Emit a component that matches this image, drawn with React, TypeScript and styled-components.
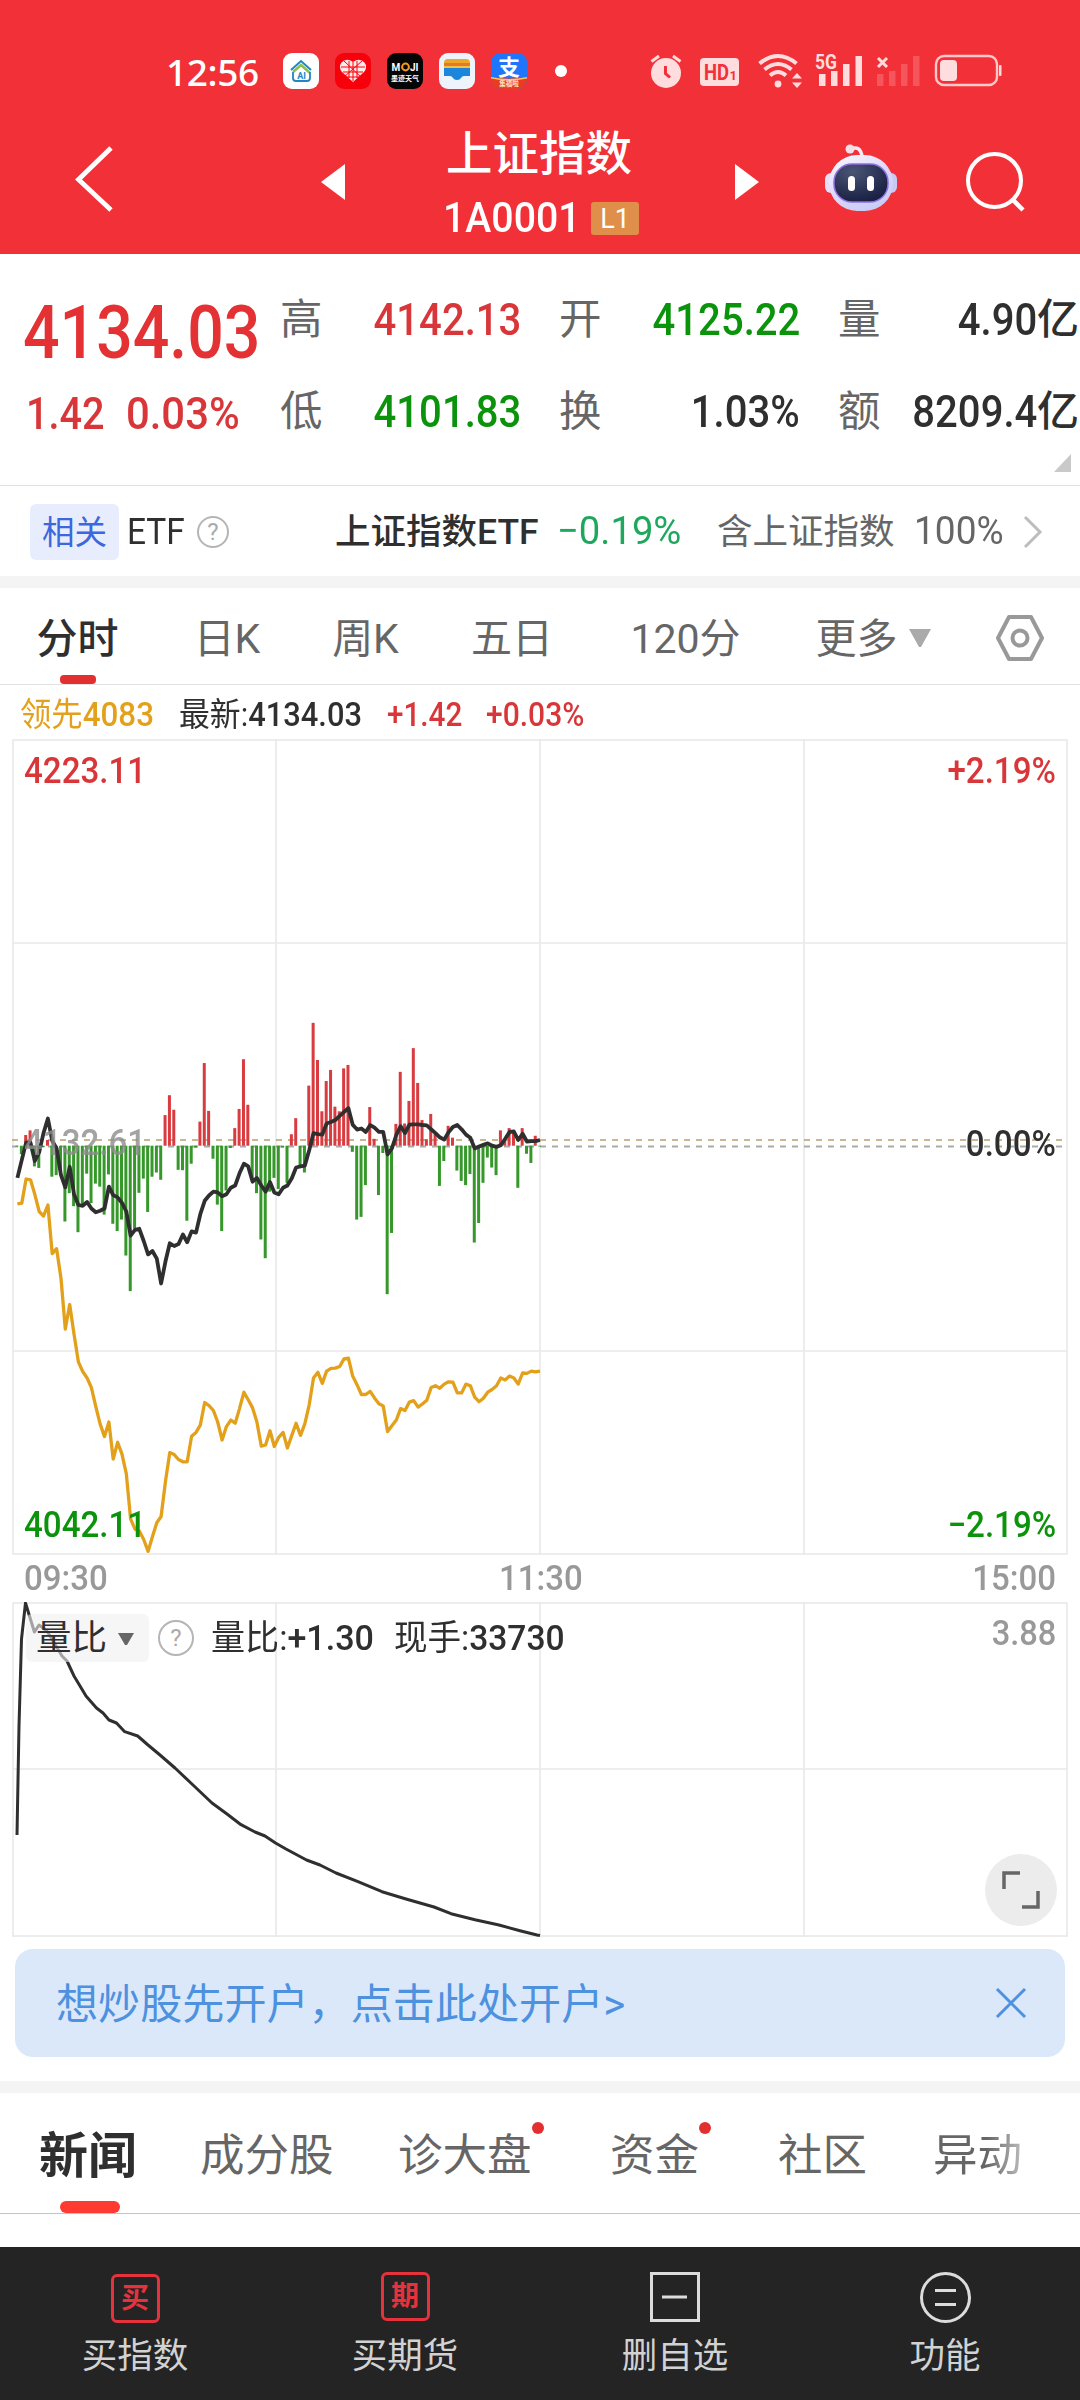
import { ReactNode } from 'react'
import styled, { createGlobalStyle, css } from 'styled-components'

const colors = {
  brand: '#f23037',
  red: '#d9363a',
  green: '#0c930c',
  ink: '#2f2f2f',
  gray: '#666',
  light: '#999',
  line: '#e9e9e9',
  amber: '#e3a01b',
}

const GlobalStyle = createGlobalStyle`
  * {
    box-sizing: border-box;
  }

  body {
    margin: 0;

    font-family: Roboto, 'Noto Sans CJK SC', sans-serif;
    color: ${colors.ink};

    background: #fff;
  }
`

const Page = styled.div`
  display: flex;
  flex-direction: column;

  width: 1080px;
  height: 2400px;
  overflow: hidden;

  background: #fff;
`

/* Condensed digits: $w is the box that the text takes, $k the squeeze */
const NumStyled = styled.span<{
  $w: number
  $size: number
  $color?: string
  $weight?: number
  $right?: boolean
}>`
  display: inline-flex;
  flex: none;

  justify-content: ${({ $right }) => ($right ? 'flex-end' : 'flex-start')};

  width: ${({ $w }) => $w}px;

  font-size: ${({ $size }) => $size}px;
  font-weight: ${({ $weight = 500 }) => $weight};
  line-height: 1;
  color: ${({ $color = 'inherit' }) => $color};
  white-space: nowrap;
`

const NumInner = styled.span<{ $k: number; $right?: boolean }>`
  flex: none;

  transform: scaleX(${({ $k }) => $k});
  transform-origin: ${({ $right }) => ($right ? 'right' : 'left')} center;
`

const Regular = styled.span`
  font-weight: 400;
`

type NumProps = {
  w: number
  size: number
  k?: number
  color?: string
  weight?: number
  right?: boolean
  children: ReactNode
}

const Num = ({ w, size, k = 0.9, color, weight, right, children }: NumProps) => (
  <NumStyled $w={w} $size={size} $color={color} $weight={weight} $right={right}>
    <NumInner $k={k} $right={right}>
      {children}
    </NumInner>
  </NumStyled>
)

/* ---------- header ---------- */

const HeaderStyled = styled.header`
  height: 254px;

  color: #fff;

  background: ${colors.brand};
`

const StatusBar = styled.div`
  display: flex;

  align-items: center;

  height: 120px;
  padding: 22px 77px 0 166px;
`

const Clock = styled.span`
  width: 117px;

  font-family: 'Noto Sans', sans-serif;
  font-size: 37px;
  font-weight: 500;
  line-height: 1;
  letter-spacing: -0.4px;
`

const AppIcons = styled.div`
  display: flex;

  gap: 16px;

  & svg {
    overflow: visible;
  }
`

const StatusDot = styled.i`
  width: 12px;
  height: 12px;
  margin: 0 83px 0 28px;

  background: #fff;
  border-radius: 50%;
`

const Tray = styled.div`
  display: flex;
  flex: none;

  align-items: center;
`

const NavBar = styled.nav`
  display: flex;

  height: 134px;
`

const BackIcon = styled.svg`
  margin: 26px 0 0 74px;
`

const ArrowIcon = styled.svg<{ $left: number }>`
  margin: 43px 0 0 ${({ $left }) => $left}px;
`

const TitleBlock = styled.div`
  width: 290px;
  margin-left: 50px;
  padding-left: 48px;
`

const Title = styled.h1`
  margin: 8px 0 0 3px;

  font-size: 46.5px;
  font-weight: 500;
  line-height: 52px;
`

const CodeLine = styled.div`
  display: flex;

  gap: 13px;
  align-items: center;

  height: 34px;
  margin-top: 21px;
`

const LevelBadge = styled.span`
  width: 48px;
  height: 33px;

  font-size: 27px;
  line-height: 34px;
  text-align: center;

  background: #e08f4b;
  border-radius: 3px;
`

const RobotIcon = styled.svg`
  margin: 22px 0 0 64px;
`

const SearchIcon = styled.svg`
  margin: 30px 0 0 68px;
`

/* ---------- quote ---------- */

const QuoteStyled = styled.section`
  display: grid;
  grid-template-columns: 242px 241px 241px 241px;
  column-gap: 38px;

  height: 200px;
  padding-top: 42px;
`

const Price = styled.div`
  padding-left: 23px;
`

const PriceChange = styled.div`
  display: flex;

  gap: 26px;

  margin-top: 22px;
  padding-left: 3px;
`

const Stat = styled.dl`
  display: flex;

  align-items: center;
  justify-content: space-between;

  height: 48px;
  margin: 0 0 44px;
`

const StatName = styled.dt`
  font-size: 42.5px;
  line-height: 48px;
  color: ${colors.gray};
`

const StatValue = styled.dd<{ $color?: string }>`
  display: flex;

  align-items: center;

  margin: 0;

  font-size: 42px;
  font-weight: 500;
  line-height: 48px;
  color: ${({ $color = colors.ink }) => $color};
`

const CornerRow = styled.div`
  display: flex;

  justify-content: flex-end;

  height: 32px;
  padding-right: 9px;

  border-bottom: 1px solid #e2e2e2;
`

/* ---------- etf ---------- */

const EtfRow = styled.section`
  display: flex;

  align-items: center;

  height: 90px;
  padding: 1px 37px 0 30px;

  font-size: 35.5px;
  line-height: 1;
`

const RelatedTag = styled.span`
  width: 89px;
  height: 56px;
  margin-right: 8px;

  font-size: 32.5px;
  line-height: 58px;
  color: #3c67dd;
  text-align: center;

  background: #e7edfc;
  border-radius: 6px;
`

const EtfName = styled.span`
  width: 222px;
  margin-left: 106px;
  padding-top: 3px;

  font-weight: 500;
`

const EtfWeight = styled.span`
  width: 197px;
  padding-top: 3px;

  color: ${colors.gray};
`

const Help = styled.span<{ $size: number }>`
  display: inline-flex;

  align-items: center;
  justify-content: center;

  width: ${({ $size }) => $size}px;
  height: ${({ $size }) => $size}px;

  font-size: 24px;
  line-height: 1;
  color: #aaa;

  border: 2px solid #b5b5b5;
  border-radius: 50%;
`

const Band = styled.div`
  flex: none;

  height: 12px;

  background: #f4f4f4;
`

/* ---------- tabs ---------- */

const PeriodTabs = styled.nav`
  display: grid;
  grid-template-columns: 155px 144px 133px 160px 187px 189px 104px;

  height: 97px;

  border-bottom: 1px solid #e2e2e2;
`

const PeriodTab = styled.span<{ $active?: boolean }>`
  position: relative;

  display: flex;

  gap: 10px;
  align-items: center;
  justify-content: center;

  padding-top: 6px;

  font-size: 41px;
  line-height: 1;
  color: ${colors.gray};

  & svg {
    margin-top: -3px;
  }

  ${({ $active }) =>
    $active &&
    css`
      font-weight: 500;
      color: ${colors.ink};

      &::after {
        position: absolute;
        bottom: 0;
        left: 60px;

        width: 36px;
        height: 9px;

        content: '';

        background: #e23030;
        border-radius: 4px;
      }
    `}
`

/* ---------- charts ---------- */

const Legend = styled.div`
  display: flex;

  align-items: center;

  height: 54px;
  padding: 4px 0 0 20px;
`

const ChartBox = styled.div<{ $height: number }>`
  position: relative;

  height: ${({ $height }) => $height}px;

  & > svg {
    display: block;
  }
`

const Mark = styled.span<{ $top: number; $side: 'left' | 'right' }>`
  position: absolute;
  top: ${({ $top }) => $top}px;
  ${({ $side }) => $side}: 24px;

  line-height: 1;
`

const TimeAxis = styled.div`
  display: flex;

  align-items: center;
  justify-content: space-between;

  height: 48px;
  padding: 2px 24px 0;
`

const IndicatorBar = styled.div`
  position: absolute;
  top: 12px;
  left: 26px;

  display: flex;

  align-items: center;
`

const IndicatorPick = styled.span`
  display: flex;

  gap: 10px;
  align-items: center;

  width: 123px;
  height: 48px;
  margin-right: 9px;
  padding: 2px 0 0 10px;

  font-size: 35.5px;
  line-height: 1;

  background: rgba(240, 240, 240, 0.6);
  border-radius: 6px;
`

const IndicatorValues = styled.span`
  display: flex;

  margin-left: 17px;
  padding-top: 2px;
`

const ExpandButton = styled.button`
  position: absolute;
  right: 23px;
  bottom: 11px;

  width: 72px;
  height: 72px;
  padding: 0;

  background: #ececec;
  border: 0;
  border-radius: 50%;
`

/* ---------- banner and news ---------- */

const Banner = styled.div`
  display: flex;

  align-items: center;
  justify-content: space-between;

  height: 108px;
  margin: 12px 15px 24px;
  padding: 0 38px 0 41px;

  font-size: 42.1px;
  line-height: 1;
  color: #4d91df;

  background: #dbe8fa;
  border-radius: 18px;
`

const BannerText = styled.span`
  padding-top: 4px;
`

const NewsTabs = styled.nav`
  display: grid;
  grid-template-columns: 162px 198px 212px 168px 155px 100px;

  align-items: center;

  height: 121px;
  padding-left: 38px;

  border-bottom: 1px solid #c4c4c4;
`

const NewsTab = styled.span<{ $active?: boolean; $dot?: boolean; $fade?: boolean }>`
  position: relative;

  display: flex;

  align-items: center;
  justify-self: start;

  height: 120px;
  padding-top: 6px;

  font-size: 44.5px;
  line-height: 1;
  color: ${colors.gray};

  ${({ $active }) =>
    $active &&
    css`
      padding-left: 1px;

      font-size: 49px;
      font-weight: 700;
      color: ${colors.ink};

      &::after {
        position: absolute;
        bottom: 0;
        left: 22px;

        width: 60px;
        height: 12px;

        content: '';

        background: #ff3a31;
        border-radius: 6px;
      }
    `}

  ${({ $dot }) =>
    $dot &&
    css`
      &::after {
        position: absolute;
        top: 29px;
        right: -12px;

        width: 12px;
        height: 12px;

        content: '';

        background: #e23030;
        border-radius: 50%;
      }
    `}

  ${({ $fade }) =>
    $fade &&
    css`
      color: transparent;

      background: linear-gradient(90deg, #666 60%, #bbb);
      background-clip: text;
    `}
`

const BottomBar = styled.footer`
  display: grid;
  grid-template-columns: repeat(4, 1fr);

  height: 153px;
  margin-top: auto;

  background: #242424;
`

const BottomItem = styled.div`
  display: flex;
  flex-direction: column;

  gap: 14px;
  align-items: center;

  padding-top: 25px;

  font-size: 35.5px;
  line-height: 38px;
  color: #d2d2d2;
`

const StampIcon = styled.span<{ $shift?: number }>`
  display: flex;

  align-items: center;
  justify-content: center;

  width: 49px;
  height: 49px;
  margin: ${({ $shift = 0 }) => 1 + $shift}px 0 ${({ $shift = 0 }) => 1 - $shift}px;

  font-size: 28px;
  font-weight: 700;
  line-height: 1;
  color: #e5323c;

  border: 3px solid #e5323c;
  border-radius: 6px;
`

/* one value per minute, 09:30 to 11:30, in chart units */
const UNIT = 2.613
const BASE = 435

const price = [
  517, 470, 425, 425, 473, 450, 400, 362, 420, 440, 510, 542, 488, 560, 588,
  590, 580, 597, 607, 603, 597, 540, 562, 568, 582, 605, 668, 653, 650, 682,
  717, 708, 728, 793, 735, 688, 695, 690, 665, 685, 657, 660, 612, 577, 563,
  553, 555, 565, 560, 543, 537, 505, 480, 487, 527, 517, 537, 553, 528, 555,
  560, 543, 537, 518, 490, 487, 485, 445, 400, 403, 404, 375, 371, 366, 355,
  345, 335, 378, 391, 388, 397, 379, 386, 397, 397, 456, 440, 405, 382, 400,
  378, 377, 377, 379, 380, 390, 400, 411, 417, 398, 384, 379, 390, 404, 412,
  440, 435, 431, 427, 433, 436, 432, 415, 397, 396, 418, 402, 422, 421, 421,
  418,
]

const lead = [
  585, 583, 520, 522, 560, 605, 617, 588, 715, 702, 780, 912, 848, 925, 998,
  1023, 1040, 1065, 1115, 1160, 1193, 1155, 1252, 1208, 1238, 1290, 1408, 1435,
  1440, 1462, 1493, 1455, 1418, 1402, 1310, 1235, 1240, 1253, 1259, 1259, 1192,
  1182, 1163, 1104, 1112, 1125, 1155, 1202, 1167, 1150, 1158, 1120, 1077, 1097,
  1118, 1155, 1218, 1215, 1178, 1219, 1195, 1182, 1223, 1190, 1158, 1190, 1160,
  1110, 1040, 1025, 1054, 1022, 1015, 1014, 1010, 990, 988, 1035, 1058, 1083,
  1083, 1075, 1092, 1107, 1113, 1180, 1165, 1150, 1120, 1125, 1103, 1099, 1116,
  1108, 1098, 1065, 1060, 1067, 1056, 1050, 1051, 1079, 1079, 1056, 1060, 1090,
  1102, 1093, 1077, 1070, 1060, 1040, 1045, 1035, 1040, 1056, 1027, 1028, 1022,
  1024, 1022,
]

const volume = [
  435, 455, 405, 393, 487, 491, 437, 418, 514, 510, 500, 631, 557, 591, 659,
  588, 506, 583, 532, 540, 613, 508, 637, 656, 626, 720, 813, 650, 556, 519,
  606, 514, 503, 522, 353, 301, 339, 496, 497, 629, 480, 438, 370, 217, 342,
  467, 587, 656, 550, 439, 387, 337, 207, 326, 520, 557, 678, 727, 553, 517,
  546, 438, 530, 403, 361, 487, 503, 276, 112, 209, 343, 264, 235, 331, 343,
  231, 222, 449, 626, 619, 536, 332, 415, 562, 452, 821, 661, 376, 240, 375,
  316, 178, 269, 366, 416, 350, 400, 538, 473, 381, 412, 498, 525, 536, 507,
  686, 635, 530, 464, 490, 510, 393, 420, 387, 395, 543, 387, 454, 478, 407,
  435,
]

const ratio =
  '17,233 19,124 21.5,37 25.5,1 34.4,30 39,23 47,29 62,54 67,59 74,74 86,94 96.5,106 103,111 109,118 116.5,121 124.7,129.7 137.7,134 148,143 160,153 175,166 193,183 212,201 227,212 241,222.7 255,230 265,234 275.5,241 286,247 306.5,258 320,263 336,271 358,279.7 382,289.7 406,297 434,305 451,311.7 475,317.7 499,323 520,328.7 537,333 540,333.5'

const toX = (i: number) => 17.4 + i * 4.355
const toY = (v: number) => 241 + v / UNIT
const toPoints = (values: number[]) =>
  values.map((v, i) => `${toX(i).toFixed(1)},${toY(v).toFixed(1)}`).join(' ')

const Grid = ({ height, rows }: { height: number; rows: number[] }) => (
  <g stroke={colors.line} strokeWidth="1.6" fill="none">
    <rect x="13" y="1" width="1054" height={height - 2} />
    {[276, 540, 804].map((x) => (
      <path key={x} d={`M${x} 0V${height}`} />
    ))}
    {rows.map((y) => (
      <path key={y} d={`M13 ${y}H1067`} />
    ))}
  </g>
)

const PriceChart = () => (
  <svg width="1080" height="816" viewBox="0 0 1080 816">
    <Grid height={816} rows={[204, 612]} />
    <path
      d="M12 401H1067"
      stroke="#b9a06c"
      strokeWidth="1.6"
      strokeDasharray="6 6"
    />
    <path
      d="M12 407.5H1067"
      stroke="#aaa"
      strokeWidth="2"
      strokeDasharray="6 6"
    />
    {volume.map((v, i) => {
      const up = v < BASE

      return (
        <rect
          key={i}
          x={toX(i) - 1.9}
          y={up ? toY(v) : toY(BASE - 2)}
          width="3"
          height={Math.abs(v - BASE + 2) / UNIT}
          fill={up ? '#d93c40' : '#36982a'}
        />
      )
    })}
    <polyline
      points={toPoints(lead)}
      fill="none"
      stroke={colors.amber}
      strokeWidth="3.3"
      strokeLinejoin="round"
    />
    <polyline
      points={toPoints(price)}
      fill="none"
      stroke="#2f2f2f"
      strokeWidth="3.8"
      strokeLinejoin="round"
    />
  </svg>
)

const RatioChart = () => (
  <svg width="1080" height="335" viewBox="0 0 1080 335">
    <Grid height={335} rows={[167]} />
    <polyline
      points={ratio}
      fill="none"
      stroke="#2f2f2f"
      strokeWidth="3"
      strokeLinejoin="round"
    />
  </svg>
)

const AppIconList = () => (
  <AppIcons>
    <svg width="36" height="36" viewBox="0 0 36 36">
      <rect width="36" height="36" rx="9" fill="#fff" />
      <path d="M8 17 18 8l10 9" fill="none" stroke="#2386c4" strokeWidth="2" />
      <path d="m10 19 8-7 9 8" fill="none" stroke="#8cc152" strokeWidth="2.6" />
      <path
        d="M10 19v6q0 3 3 3h11q3 0 3-3v-6"
        fill="none"
        stroke="#2386c4"
        strokeWidth="1.8"
      />
      <text x="18.5" y="25.5" fontSize="9" fontWeight="700" textAnchor="middle" fill="#2386c4">
        AI
      </text>
    </svg>
    <svg width="36" height="36" viewBox="0 0 36 36">
      <rect width="36" height="36" rx="9" fill="#f7000c" />
      <path
        d="M18 29 7 19q-4-5-.5-9.5 5-5 11.5-.5 6.5-4.5 11.5.5 3.500 4.500-.5 9.500Z"
        fill="#ffe9e9"
      />
      <path
        d="M14 8v17M18 9v19M22 8v17M9 8l18 17M27 8 9 24M6 14h24M8 19h20M12 24h12"
        stroke="#f7000c"
        strokeWidth="1"
      />
    </svg>
    <svg width="36" height="36" viewBox="0 0 36 36">
      <rect width="36" height="36" rx="9" fill="#050505" />
      <text x="4.5" y="18" fontSize="10" fontWeight="700" fill="#fff">
        M
      </text>
      <circle cx="18.5" cy="14" r="3.4" fill="none" stroke="#f39a1e" strokeWidth="2" />
      <text x="23" y="18" fontSize="10" fontWeight="700" fill="#fff">
        JI
      </text>
      <text x="18" y="27.5" fontSize="7" fontWeight="700" textAnchor="middle" fill="#fff">
        墨迹天气
      </text>
    </svg>
    <svg width="36" height="36" viewBox="0 0 36 36">
      <rect width="36" height="36" rx="9" fill="#eef4fb" />
      <path d="M5 10q0-4 4-4h18q4 0 4 4v3H5Z" fill="#f0a52b" />
      <path d="M5 10h26v4H5Z" fill="#e8762d" />
      <path d="M5 13h26v3H5Z" fill="#f2c43a" />
      <path d="M5 15h26v8h-6q-2 0-3 2-1 2-4 2t-4-2q-1-2-3-2H5Z" fill="#1c86dc" />
    </svg>
    <svg width="36" height="36" viewBox="0 0 36 36">
      <clipPath id="pay">
        <rect width="36" height="36" rx="9" />
      </clipPath>
      <g clipPath="url(#pay)">
        <rect width="36" height="36" fill="#1f76fb" />
        <path d="M0 24q18 3 36 0v12H0Z" fill="#ea3b25" />
        <path d="M0 24q18 4 36 0v1.500q-18 4-36 0Z" fill="#f6c56a" />
      </g>
      <text x="18" y="21.5" fontSize="22" fontWeight="700" textAnchor="middle" fill="#fff">
        支
      </text>
      <text x="18" y="33" fontSize="6.5" fontWeight="700" textAnchor="middle" fill="#ffe7c0">
        集福啦
      </text>
    </svg>
  </AppIcons>
)

const TrayIcons = () => (
  <Tray>
    <svg width="353" height="36" viewBox="0 0 353 36" fill="#ffdcdd">
      <circle cx="16" cy="20" r="15" />
      <path d="M1.5 8.5 9 3M30.5 8.5 23 3" stroke="#ffdcdd" strokeWidth="3" />
      <path d="M15.5 13v7.5l4.5 4" fill="none" stroke={colors.brand} strokeWidth="3" />
      <rect x="50" y="5" width="39" height="28" rx="4" />
      <text x="54" y="27" fontSize="22" fontWeight="700" textLength="25" lengthAdjust="spacingAndGlyphs" fill={colors.brand}>
        HD
      </text>
      <text x="79.5" y="27" fontSize="13" fontWeight="700" fill={colors.brand}>
        1
      </text>
      <g fill="none" stroke="#ffdcdd" strokeWidth="4">
        <path d="M109.5 10.5q18.500-15 37 0" />
        <path d="M114.5 16.5q13.500-11 27 0" />
        <path d="M120 22.5q8-7 16 0" />
      </g>
      <circle cx="128" cy="31" r="3.4" />
      <path d="m147 20 5 5.5h-10ZM147 35l5-5.500h-10Z" />
      <text x="165" y="16" fontSize="20" fontWeight="700" textLength="22" lengthAdjust="spacingAndGlyphs">
        5G
      </text>
      <path d="M169 21h6.500v12H169ZM181 18h6.500v15H181ZM193 11h6.500v22H193ZM205.500 3h6.500v30h-6.500Z" />
      <path d="m228 5 9 9m0-9-9 9" stroke="#ffdcdd" strokeWidth="3" />
      <path
        d="M227 21h6.500v12H227ZM239 18h6.500v15H239ZM251 11h6.500v22H251ZM263 3h6.500v30H263Z"
        opacity=".22"
      />
      <rect x="286" y="3" width="61" height="29" rx="8" fill="none" stroke="#ffc9cb" strokeWidth="2.4" />
      <rect x="290" y="7" width="17" height="21" rx="4" />
      <rect x="349" y="12" width="2.5" height="11" rx="1" />
    </svg>
  </Tray>
)

const Header = () => (
  <HeaderStyled>
    <StatusBar>
      <Clock>12:56</Clock>
      <AppIconList />
      <StatusDot />
      <TrayIcons />
    </StatusBar>

    <NavBar>
      <BackIcon width="40" height="66" viewBox="0 0 40 66">
        <path d="M37 2 4.5 33.5 37 64" fill="none" stroke="#fff" strokeWidth="4.8" />
      </BackIcon>
      <ArrowIcon $left={207} width="24" height="38" viewBox="0 0 24 38">
        <path d="M24 1v36L0 19Z" fill="#fff" />
      </ArrowIcon>
      <TitleBlock>
        <Title>上证指数</Title>
        <CodeLine>
          <Num w={135} size={42} k={0.935}>
            1A0001
          </Num>
          <LevelBadge>L1</LevelBadge>
        </CodeLine>
      </TitleBlock>
      <ArrowIcon $left={50} width="24" height="38" viewBox="0 0 24 38">
        <path d="M0 1v36l24-18Z" fill="#fff" />
      </ArrowIcon>
      <RobotIcon width="74" height="74" viewBox="0 0 74 74">
        <defs>
          <linearGradient id="shell" x1="0" y1="0" x2="0.6" y2="1">
            <stop offset="0" stopColor="#fdfbff" />
            <stop offset=".55" stopColor="#ddd9fa" />
            <stop offset="1" stopColor="#c9cdf6" />
          </linearGradient>
          <radialGradient id="visor" cx=".35" cy=".2" r=".8">
            <stop offset="0" stopColor="#4a5574" />
            <stop offset="1" stopColor="#1a2144" />
          </radialGradient>
        </defs>
        <path d="M28 7q9-4 11 7" fill="none" stroke="#f4e9f2" strokeWidth="3.5" />
        <circle cx="27" cy="7" r="4.5" fill="#f2dfe8" />
        <rect x="2" y="31" width="12" height="20" rx="6" fill="#e4defa" />
        <rect x="62" y="31" width="12" height="20" rx="6" fill="#c8c9f5" />
        <rect x="6" y="13" width="64" height="56" rx="28" fill="url(#shell)" />
        <rect x="11" y="22" width="54" height="38" rx="18" fill="url(#visor)" stroke="#8d6fe0" strokeWidth="1.5" />
        <rect x="25" y="34" width="7" height="15" rx="3.5" fill="#fff" />
        <rect x="44" y="34" width="7" height="15" rx="3.5" fill="#fff" />
      </RobotIcon>
      <SearchIcon width="62" height="64" viewBox="0 0 62 64">
        <circle cx="29.5" cy="30.5" r="26.5" fill="none" stroke="#fff" strokeWidth="4" />
        <path d="m47 49 11 11" stroke="#fff" strokeWidth="4.5" />
      </SearchIcon>
    </NavBar>
  </HeaderStyled>
)

const stats = [
  [
    { name: '高', value: '4142.13', color: colors.red },
    { name: '低', value: '4101.83', color: colors.green },
  ],
  [
    { name: '开', value: '4125.22', color: colors.green },
    { name: '换', value: '1.03%' },
  ],
  [
    { name: '量', value: '4.90', unit: '亿' },
    { name: '额', value: '8209.4', unit: '亿' },
  ],
] as { name: string; value: string; color?: string; unit?: string }[][]

const Quote = () => (
  <>
    <QuoteStyled>
      <Price>
        <Num w={235} size={74} k={0.87} color="#e33134">
          4134.03
        </Num>
        <PriceChange>
          <Num w={74} size={44} color={colors.red}>
            1.42
          </Num>
          <Num w={110} size={44} k={0.95} color={colors.red}>
            0.03%
          </Num>
        </PriceChange>
      </Price>
      {stats.map((column) => (
        <div key={column[0].name}>
          {column.map(({ name, value, color, unit }) => (
            <Stat key={name}>
              <StatName>{name}</StatName>
              <StatValue $color={color}>
                <Num w={120} size={44} k={0.91} right>
                  {value}
                </Num>
                {unit}
              </StatValue>
            </Stat>
          ))}
        </div>
      ))}
    </QuoteStyled>
    <CornerRow>
      <svg width="17" height="18">
        <path d="M17 0v18H0Z" fill="#c9c9c9" />
      </svg>
    </CornerRow>
  </>
)

const Etf = () => (
  <EtfRow>
    <RelatedTag>相关</RelatedTag>
    <Num w={70} size={36} k={0.93} weight={400}>
      ETF
    </Num>
    <Help $size={32}>?</Help>
    <EtfName>上证指数ETF</EtfName>
    <Num w={160} size={39} k={0.98} weight={400} color="#1fa85d">
      −0.19%
    </Num>
    <EtfWeight>含上证指数</EtfWeight>
    <Num w={109} size={39} k={0.95} weight={400} color={colors.gray}>
      100%
    </Num>
    <svg width="20" height="34" viewBox="0 0 20 34">
      <path d="m2 2 15 15L2 32" fill="none" stroke="#bdbdbd" strokeWidth="3" />
    </svg>
  </EtfRow>
)

const Tabs = () => (
  <PeriodTabs>
    <PeriodTab $active>分时</PeriodTab>
    <PeriodTab>日K</PeriodTab>
    <PeriodTab>周K</PeriodTab>
    <PeriodTab>五日</PeriodTab>
    <PeriodTab>120分</PeriodTab>
    <PeriodTab>
      更多
      <svg width="24" height="20" viewBox="0 0 24 20">
        <path d="M1 1h22L13 19h-2Z" fill="#aaa" />
      </svg>
    </PeriodTab>
    <PeriodTab>
      <svg width="50" height="48" viewBox="0 0 50 48" fill="none" stroke="#999" strokeWidth="4">
        <path d="M14 3h22l11 21-11 21H14L3 24Z" strokeLinejoin="round" />
        <circle cx="25" cy="24" r="7.5" />
      </svg>
    </PeriodTab>
  </PeriodTabs>
)

const Charts = () => (
  <>
    <Legend>
      <Num w={159} size={33} k={0.95} color={colors.amber}>
        <Regular>领先</Regular>4083
      </Num>
      <Num w={208} size={33} k={0.935}>
        <Regular>最新:</Regular>4134.03
      </Num>
      <Num w={99} size={33} k={0.9} color={colors.red}>
        +1.42
      </Num>
      <Num w={110} size={33} k={0.91} color={colors.red}>
        +0.03%
      </Num>
    </Legend>

    <ChartBox $height={815}>
      <PriceChart />
      <Mark $top={14} $side="left">
        <Num w={120} size={36} k={0.92} color={colors.red}>
          4223.11
        </Num>
      </Mark>
      <Mark $top={14} $side="right">
        <Num w={120} size={36} k={0.92} color={colors.red} right>
          +2.19%
        </Num>
      </Mark>
      <Mark $top={386} $side="left">
        <Num w={120} size={36} k={0.92} color="rgba(140, 140, 140, 0.8)">
          4132.61
        </Num>
      </Mark>
      <Mark $top={387} $side="right">
        <Num w={120} size={36} k={0.92} right>
          0.00%
        </Num>
      </Mark>
      <Mark $top={768} $side="left">
        <Num w={120} size={36} k={0.92} color={colors.green}>
          4042.11
        </Num>
      </Mark>
      <Mark $top={768} $side="right">
        <Num w={120} size={36} k={0.92} color={colors.green} right>
          −2.19%
        </Num>
      </Mark>
    </ChartBox>

    <TimeAxis>
      <Num w={82} size={35.5} k={0.93} color={colors.light}>
        09:30
      </Num>
      <Num w={82} size={35.5} k={0.93} color={colors.light}>
        11:30
      </Num>
      <Num w={82} size={35.5} k={0.93} color={colors.light} right>
        15:00
      </Num>
    </TimeAxis>

    <ChartBox $height={335}>
      <RatioChart />
      <IndicatorBar>
        <IndicatorPick>
          量比
          <svg width="18" height="14" viewBox="0 0 18 14">
            <path d="M1 1h16l-7 12H8Z" fill="#666" />
          </svg>
        </IndicatorPick>
        <Help $size={36}>?</Help>
        <IndicatorValues>
          <Num w={183} size={35.5} k={0.96}>
            <Regular>量比:</Regular>+1.30
          </Num>
          <Num w={175} size={35.5} k={0.945}>
            <Regular>现手:</Regular>33730
          </Num>
        </IndicatorValues>
      </IndicatorBar>
      <Mark $top={14} $side="right">
        <Num w={70} size={35.5} k={0.92} color={colors.light} right>
          3.88
        </Num>
      </Mark>
      <ExpandButton>
        <svg width="72" height="72" fill="none" stroke="#666" strokeWidth="3.5">
          <path d="M19 35V19h16M53 37v16H37" />
        </svg>
      </ExpandButton>
    </ChartBox>
  </>
)

export default function App() {
  return (
    <Page>
      <GlobalStyle />

      <Header />
      <Quote />
      <Etf />
      <Band />
      <Tabs />
      <Charts />

      <Banner>
        <BannerText>想炒股先开户，点击此处开户&gt;</BannerText>
        <svg width="32" height="32" viewBox="0 0 32 32">
          <path d="m2 2 28 28M30 2 2 30" stroke="#4d91df" strokeWidth="3" />
        </svg>
      </Banner>

      <Band />

      <NewsTabs>
        <NewsTab $active>新闻</NewsTab>
        <NewsTab>成分股</NewsTab>
        <NewsTab $dot>诊大盘</NewsTab>
        <NewsTab $dot>资金</NewsTab>
        <NewsTab>社区</NewsTab>
        <NewsTab $fade>异动</NewsTab>
      </NewsTabs>

      <BottomBar>
        <BottomItem>
          <StampIcon $shift={1}>买</StampIcon>
          买指数
        </BottomItem>
        <BottomItem>
          <StampIcon $shift={-1}>期</StampIcon>
          买期货
        </BottomItem>
        <BottomItem>
          <svg width="51" height="51" fill="none" stroke="#dcdcdc" strokeWidth="3">
            <path d="M1.5 1.5h47v47h-47ZM12 25h25" />
          </svg>
          删自选
        </BottomItem>
        <BottomItem>
          <svg width="51" height="51" fill="none" stroke="#dcdcdc" strokeWidth="3">
            <circle cx="25.5" cy="25.5" r="24" />
            <path d="M15 18.5h21M15 32.5h21" />
          </svg>
          功能
        </BottomItem>
      </BottomBar>
    </Page>
  )
}
